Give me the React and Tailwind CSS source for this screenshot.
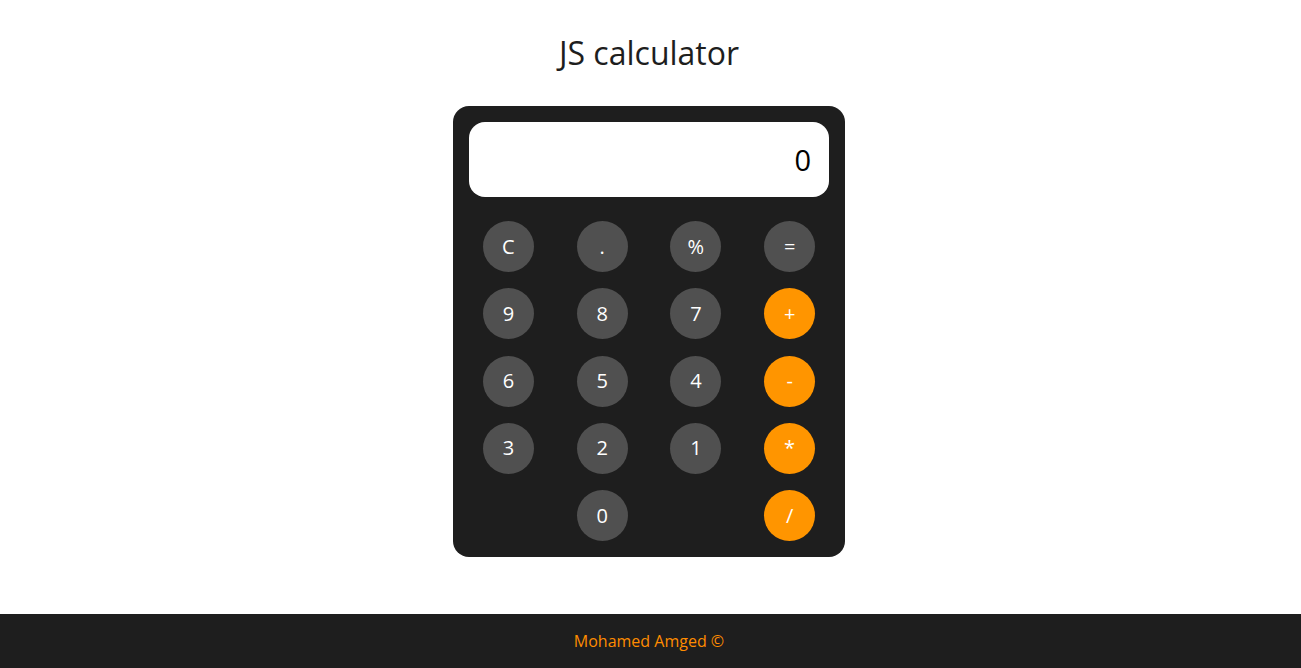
import React from "react";

const rows = [
  ["C", ".", "%", "="],
  ["9", "8", "7", "+"],
  ["6", "5", "4", "-"],
  ["3", "2", "1", "*"],
  [null, "0", null, "/"],
];

export default function App() {
  return (
    <div
      className="min-h-screen flex flex-col bg-white"
      style={{ fontFamily: '"Open Sans", sans-serif' }}
    >
      <main className="flex-1 flex flex-col items-center pr-[3px]">
        <h1 className="text-[32px] leading-[48px] text-[#1e1e1e] mt-[29px] mb-[29px]">
          JS calculator
        </h1>
        <div className="w-[392px] bg-[#1e1e1e] rounded-[16px] pt-[16px] pb-[16px]">
          <div className="mx-[16px] h-[75px] bg-white rounded-[16px] flex items-center justify-end pr-[18px] text-[29px] text-black">
            0
          </div>
          <div className="mx-[8.5px] mt-[24px] grid grid-cols-4 gap-y-[16.3px]">
            {rows.flat().map((k, i) => (
              <div key={i} className="flex justify-center">
                {k === null ? (
                  <div className="w-[51px] h-[51px]" />
                ) : (
                  <button
                    className={
                      "w-[51px] h-[51px] rounded-full flex items-center justify-center text-[20px] text-white " +
                      (["+", "-", "*", "/"].includes(k)
                        ? "bg-[#ff9500]"
                        : "bg-[#505050]")
                    }
                  >
                    {k}
                  </button>
                )}
              </div>
            ))}
          </div>
        </div>
      </main>
      <footer className="h-[54px] bg-[#1e1e1e] flex items-center justify-center pr-[3px] text-[16px] text-[#ff8c00]">
        Mohamed Amged ©
      </footer>
    </div>
  );
}
